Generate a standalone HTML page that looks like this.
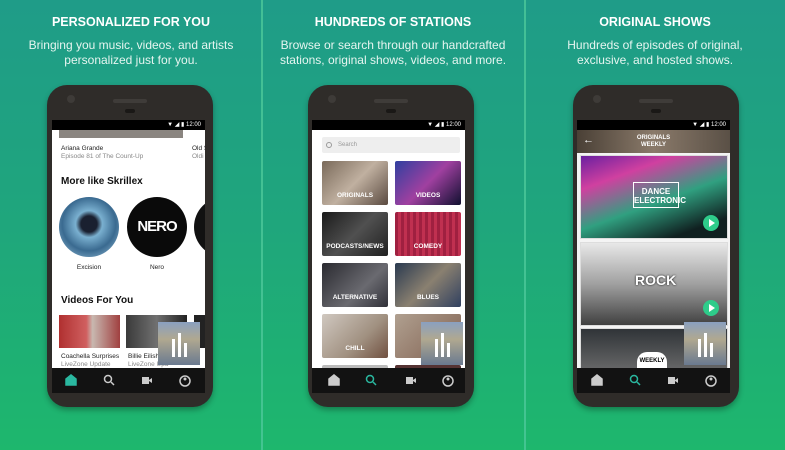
<!DOCTYPE html>
<html><head><meta charset="utf-8"><style>
*{margin:0;padding:0;box-sizing:border-box}
body{width:785px;height:450px;overflow:hidden;font-family:"Liberation Sans",sans-serif;background:linear-gradient(180deg,#1f9c88 0%,#1fa67c 50%,#1eb76d 100%);position:relative}
.div{position:absolute;top:0;width:2px;height:450px;background:#4cc89a;opacity:.8}
.t{position:absolute;width:262px;text-align:center;color:#fff;font-weight:bold;font-size:12.5px;top:15px;letter-spacing:0}
.s{position:absolute;width:262px;text-align:center;color:#e6f5f0;font-size:12px;line-height:15px;top:38px}
.ph{position:absolute;top:85px;width:166px;height:322px;border-radius:20px;background:#2f2c29;box-shadow:0 3px 6px rgba(0,0,0,.3)}
.cam{position:absolute;width:8px;height:8px;border-radius:50%;background:#3e3b38;top:10px;left:20px}
.spk{position:absolute;width:34px;height:4px;border-radius:2px;background:#3f3c39;top:14px;left:66px}
.spk2{position:absolute;width:10px;height:4px;border-radius:2px;background:#1a1816;top:24px;left:78px}
.sb{position:absolute;top:120px;width:153px;height:10px;background:#000;color:#fff;font-size:6px;text-align:right;padding-right:4px;line-height:10px}
.sc{position:absolute;top:130px;width:153px;height:238px;background:#fff;overflow:hidden}
.nav{position:absolute;top:368px;width:153px;height:25px;background:#121212}
.ab{position:absolute;font-size:6.5px;color:#222;white-space:nowrap}
.g{color:#888}
.tile{position:absolute;width:66px;height:44px;border-radius:2px;color:#fff;font-size:6.5px;font-weight:bold;text-align:center;line-height:70px;overflow:hidden}
.card{position:absolute;left:3px;width:148px;border:1px solid #ddd}
.play{position:absolute;width:16px;height:16px;border-radius:50%;background:#2ecc8a}
.play:after{content:"";position:absolute;left:6px;top:4px;border-left:6px solid #fff;border-top:4px solid transparent;border-bottom:4px solid transparent}
.mini{position:absolute;width:42px;height:43px;background:linear-gradient(180deg,#8aa0c0 0%,#b0a890 40%,#6a7a90 100%)}
.mini i{position:absolute;bottom:8px;width:3px;background:#fff}
</style></head><body>
<div class="div" style="left:261px"></div>
<div class="div" style="left:524px"></div>

<div class="t" style="left:0">PERSONALIZED FOR YOU</div>
<div class="s" style="left:0">Bringing you music, videos, and artists<br>personalized just for you.</div>
<div class="t" style="left:262px">HUNDREDS OF STATIONS</div>
<div class="s" style="left:262px">Browse or search through our handcrafted<br>stations, original shows, videos, and more.</div>
<div class="t" style="left:524px">ORIGINAL SHOWS</div>
<div class="s" style="left:524px">Hundreds of episodes of original,<br>exclusive, and hosted shows.</div>

<!-- phone 1 -->
<div class="ph" style="left:47px"><div class="cam"></div><div class="spk"></div><div class="spk2"></div></div>
<div class="sb" style="left:52px">▼ ◢ ▮ 12:00</div>
<div class="sc" style="left:52px">
 <div style="position:absolute;left:7px;top:0;width:124px;height:8px;background:#8a8580"></div>
 <div class="ab" style="left:9px;top:15px">Ariana Grande</div>
 <div class="ab g" style="left:9px;top:23px">Episode 81 of The Count-Up</div>
 <div class="ab" style="left:140px;top:15px">Old S</div>
 <div class="ab g" style="left:140px;top:23px">Oldi</div>
 <div style="position:absolute;left:9px;top:46px;font-size:10px;font-weight:bold;color:#111">More like Skrillex</div>
 <div style="position:absolute;left:7px;top:67px;width:60px;height:60px;border-radius:50%;background:radial-gradient(circle at 50% 45%,#1a2030 0 18%,#7ab0d0 30%,#3a6a90 60%,#a0c8e0 100%)"></div>
 <div style="position:absolute;left:75px;top:67px;width:60px;height:60px;border-radius:50%;background:#0a0a0a;color:#fff;font-size:15px;font-weight:bold;text-align:center;line-height:60px;letter-spacing:-1px">NERO</div>
 <div style="position:absolute;left:142px;top:67px;width:60px;height:60px;border-radius:50%;background:#111"></div>
 <div class="ab" style="left:7px;width:60px;text-align:center;top:134px">Excision</div>
 <div class="ab" style="left:75px;width:60px;text-align:center;top:134px">Nero</div>
 <div style="position:absolute;left:9px;top:165px;font-size:10px;font-weight:bold;color:#111">Videos For You</div>
 <div style="position:absolute;left:7px;top:185px;width:61px;height:33px;background:linear-gradient(90deg,#b03030 0%,#d06060 45%,#c8b8b0 55%,#a04040 100%)"></div>
 <div style="position:absolute;left:74px;top:185px;width:61px;height:33px;background:linear-gradient(90deg,#3a3a3a,#707070 50%,#222)"></div>
 <div style="position:absolute;left:142px;top:185px;width:20px;height:33px;background:#222"></div>
 <div class="ab" style="left:9px;top:223px">Coachella Surprises</div>
 <div class="ab g" style="left:9px;top:231px">LiveZone Update</div>
 <div class="ab" style="left:76px;top:223px">Billie Eilish</div>
 <div class="ab g" style="left:76px;top:231px">LiveZone Upd</div>
</div>
<div class="mini" style="left:158px;top:322px"><i style="left:14px;height:18px"></i><i style="left:20px;height:24px"></i><i style="left:26px;height:14px"></i></div>
<div class="nav" style="left:52px"></div>

<!-- phone 2 -->
<div class="ph" style="left:308px"><div class="cam"></div><div class="spk"></div><div class="spk2"></div></div>
<div class="sb" style="left:312px">▼ ◢ ▮ 12:00</div>
<div class="sc" style="left:312px">
 <div style="position:absolute;left:10px;top:7px;width:138px;height:16px;background:#eee;border-radius:2px;font-size:6px;color:#999;line-height:16px;padding-left:16px">Search</div>
 <div style="position:absolute;left:14px;top:12px;width:6px;height:6px;border:1px solid #999;border-radius:50%"></div>
 <div class="tile" style="left:10px;top:31px;background:linear-gradient(135deg,#7a6a5a,#c0b0a0 50%,#5a4a40)">ORIGINALS</div>
 <div class="tile" style="left:83px;top:31px;background:linear-gradient(135deg,#3040a0,#a040a0 50%,#101030)">VIDEOS</div>
 <div class="tile" style="left:10px;top:82px;background:linear-gradient(135deg,#1a1a1a,#505050 50%,#202020)">PODCASTS/NEWS</div>
 <div class="tile" style="left:83px;top:82px;background:repeating-linear-gradient(90deg,#a02040 0 3px,#c03050 3px 6px)">COMEDY</div>
 <div class="tile" style="left:10px;top:133px;background:linear-gradient(135deg,#2a2a30,#6a6a70 60%,#303038)">ALTERNATIVE</div>
 <div class="tile" style="left:83px;top:133px;background:linear-gradient(135deg,#2a3a50,#8a8070 50%,#304060)">BLUES</div>
 <div class="tile" style="left:10px;top:184px;background:linear-gradient(135deg,#d0c8c0,#a09080 60%,#705040)">CHILL</div>
 <div class="tile" style="left:83px;top:184px;background:linear-gradient(135deg,#b0a090,#806050)">CH</div>
 <div class="tile" style="left:10px;top:235px;background:#bbb"></div>
 <div class="tile" style="left:83px;top:235px;background:#533"></div>
</div>
<div class="mini" style="left:421px;top:322px"><i style="left:14px;height:18px"></i><i style="left:20px;height:24px"></i><i style="left:26px;height:14px"></i></div>
<div class="nav" style="left:312px"></div>

<!-- phone 3 -->
<div class="ph" style="left:573px"><div class="cam"></div><div class="spk"></div><div class="spk2"></div></div>
<div class="sb" style="left:577px">▼ ◢ ▮ 12:00</div>
<div class="sc" style="left:577px;background:#f4f4f4">
 <div style="position:absolute;left:0;top:0;width:153px;height:23px;background:linear-gradient(90deg,#4a4036,#8a7a6a 50%,#5a5046);color:#fff;font-size:6px;font-weight:bold;text-align:center;line-height:7px;padding-top:5px">ORIGINALS<br>WEEKLY</div>
 <div style="position:absolute;left:6px;top:5px;color:#fff;font-size:11px;line-height:11px">←</div>
 <div class="card" style="top:25px;height:84px;background:linear-gradient(160deg,#6a20a0 0%,#d040a0 25%,#30a080 55%,#102020 85%)"></div>
 <div style="position:absolute;left:56px;top:52px;width:46px;height:26px;border:1px solid #fff;color:#fff;font-size:8px;font-weight:bold;text-align:center;line-height:9px;padding-top:4px">DANCE<br>ELECTRONIC</div>
 <div class="card" style="top:112px;height:84px;background:linear-gradient(180deg,#e8e8e8,#a0a0a0 50%,#404040)"></div>
 <div style="position:absolute;left:58px;top:142px;color:#fff;font-size:14px;font-weight:bold;text-shadow:0 0 2px #000">ROCK</div>
 <div class="card" style="top:198px;height:50px;background:linear-gradient(180deg,#303438,#707070)"></div>
 <div style="position:absolute;left:60px;top:222px;width:30px;height:20px;border-radius:10px 10px 0 0;background:#fff;font-size:6px;font-weight:bold;text-align:center;padding-top:6px">WEEKLY</div>
</div>
<div class="play" style="left:703px;top:215px"></div>
<div class="play" style="left:703px;top:300px"></div>
<div class="mini" style="left:684px;top:322px"><i style="left:14px;height:18px"></i><i style="left:20px;height:24px"></i><i style="left:26px;height:14px"></i></div>
<div class="nav" style="left:577px"></div>

<!-- nav icons -->
<svg style="position:absolute;left:0;top:368px" width="785" height="25">
 <g fill="none" stroke-width="1.5">
  <g transform="translate(0,0)">
   <path d="M66 17v-6l5-4 5 4v6z" fill="#2ab8a0" stroke="#2ab8a0"/>
   <circle cx="108" cy="11" r="3.5" stroke="#ccc"/><path d="M111 14l3 3" stroke="#ccc"/>
   <rect x="142" y="9" width="7" height="7" fill="#ccc"/><path d="M149 12l3-2v5l-3-2z" fill="#ccc"/>
   <circle cx="185" cy="13" r="5" stroke="#ccc"/><circle cx="185" cy="11" r="1.5" fill="#ccc"/>
  </g>
  <g transform="translate(260,0)">
   <path d="M69 17v-6l5-4 5 4v6z" fill="#ccc" stroke="#ccc"/>
   <circle cx="110" cy="11" r="3.5" stroke="#2ab8a0"/><path d="M113 14l3 3" stroke="#2ab8a0"/>
   <rect x="146" y="9" width="7" height="7" fill="#ccc"/><path d="M153 12l3-2v5l-3-2z" fill="#ccc"/>
   <circle cx="188" cy="13" r="5" stroke="#ccc"/><circle cx="188" cy="11" r="1.5" fill="#ccc"/>
  </g>
  <g transform="translate(525,0)">
   <path d="M67 17v-6l5-4 5 4v6z" fill="#ccc" stroke="#ccc"/>
   <circle cx="109" cy="11" r="3.5" stroke="#2ab8a0"/><path d="M112 14l3 3" stroke="#2ab8a0"/>
   <rect x="143" y="9" width="7" height="7" fill="#ccc"/><path d="M150 12l3-2v5l-3-2z" fill="#ccc"/>
   <circle cx="186" cy="13" r="5" stroke="#ccc"/><circle cx="186" cy="11" r="1.5" fill="#ccc"/>
  </g>
 </g>
</svg>
</body></html>
